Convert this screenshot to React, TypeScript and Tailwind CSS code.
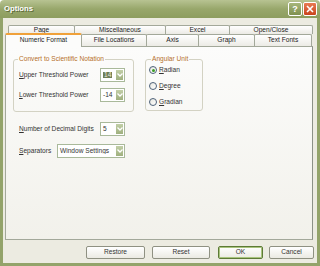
import React from "react";

const Tab = ({ label, w, selected }: { label: string; w: string; selected?: boolean }) => (
  <div
    className={`${w} flex items-center justify-center border border-b-0 border-[#a3a89a] rounded-t-[2px] -ml-px first:ml-0 text-[6.6px] leading-none text-[#222] ${
      selected
        ? "relative z-10 -mt-px h-[14px] -mb-px bg-[#fcfcfb] border-t-2 border-t-[#f0a13a] pb-[2px]"
        : "h-full bg-gradient-to-b from-white to-[#ecebe5]"
    }`}
  >
    {label}
  </div>
);

const Combo = ({ w, children }: { w: string; children: React.ReactNode }) => (
  <div className={`${w} h-[14px] flex items-center border border-[#a9b99a] bg-white`}>
    <div className="flex-1 px-[2px] text-[6.6px] leading-none text-[#333] whitespace-nowrap overflow-hidden">
      {children}
    </div>
    <div className="w-[9px] h-full flex items-center justify-center bg-gradient-to-b from-[#c2cfa8] to-[#9fb07e] border border-white rounded-[1px]">
      <svg width="6" height="4" viewBox="0 0 6 4">
        <path d="M0.5 0.5 L3 3 L5.5 0.5" stroke="white" strokeWidth="1.3" fill="none" />
      </svg>
    </div>
  </div>
);

const Radio = ({ label, checked }: { label: React.ReactNode; checked?: boolean }) => (
  <div className="flex items-center h-[8px]">
    <div className="w-[8px] h-[8px] rounded-full border border-[#4d6178] bg-gradient-to-br from-[#e6e6df] to-white flex items-center justify-center">
      {checked && <div className="w-[3px] h-[3px] rounded-full bg-[#3a9d23]" />}
    </div>
    <span className="ml-[2px] text-[6.6px] leading-none text-[#333]">{label}</span>
  </div>
);

const Button = ({ label, w, def }: { label: string; w: string; def?: boolean }) => (
  <div
    className={`${w} h-[13px] flex items-center justify-center rounded-[2px] border text-[6.6px] leading-none text-[#333] bg-gradient-to-b from-white to-[#ebeae3] ${
      def ? "border-[#5d7a36] shadow-[inset_0_0_0_1px_#a9c47e]" : "border-[#8f9182]"
    }`}
  >
    {label}
  </div>
);

const U = ({ children }: { children: React.ReactNode }) => <span className="underline">{children}</span>;

export default function App() {
  return (
    <div
      className="w-[320px] h-[266px] flex flex-col overflow-hidden"
      style={{ fontFamily: '"Liberation Sans", Arial, sans-serif' }}
    >
      {/* Title bar */}
      <div className="h-[18px] flex items-center pl-[4px] pr-[3px] bg-gradient-to-b from-[#b7c392] via-[#98a76b] to-[#8d9d5f] rounded-t-[4px]">
        <span className="text-[7.7px] font-bold text-white [text-shadow:1px_1px_0_#5d6b3a] leading-none">Options</span>
        <div className="ml-auto flex gap-px">
          <div className="w-[14px] h-[14px] rounded-[2px] border border-white bg-gradient-to-b from-[#a7b67b] to-[#7f9050] flex items-center justify-center text-white text-[9px] font-bold leading-none">
            ?
          </div>
          <div className="w-[14px] h-[14px] rounded-[2px] border border-white bg-gradient-to-b from-[#e87a52] to-[#c9431c] flex items-center justify-center">
            <svg width="8" height="8" viewBox="0 0 8 8">
              <path d="M1 1 L7 7 M7 1 L1 7" stroke="white" strokeWidth="1.6" />
            </svg>
          </div>
        </div>
      </div>

      {/* Body */}
      <div className="flex-1 flex flex-col bg-[#ecebe1] border-x-[3px] border-b-[3px] border-[#93a36a] px-[2px] pt-[7px]">
        {/* Back row of tabs */}
        <div className="flex h-[9px] pl-[3px]">
          <Tab label="Page" w="w-[67px]" />
          <Tab label="Miscellaneous" w="w-[92px]" />
          <Tab label="Excel" w="w-[65px]" />
          <Tab label="Open/Close" w="w-[84px]" />
        </div>
        {/* Front row of tabs */}
        <div className="flex h-[12px]">
          <Tab label="Numeric Format" w="w-[77px]" selected />
          <Tab label="File Locations" w="w-[66px]" />
          <Tab label="Axis" w="w-[53px]" />
          <Tab label="Graph" w="w-[57px]" />
          <Tab label="Text Fonts" w="w-[58px]" />
        </div>

        {/* Tab page */}
        <div className="w-[308px] h-[194px] border border-[#a3a89a] border-r-[#8c9187] bg-gradient-to-b from-[#fcfcfb] to-[#f2f1eb] pt-[12px] pl-[7px] flex flex-col">
          <div className="flex items-start gap-[11px]">
            {/* Scientific notation */}
            <div className="relative w-[121px] h-[53px] border border-[#d3d2c3] rounded-[3px] pt-[8px] pl-[5px]">
              <span className="absolute -top-[4px] left-[4px] px-px bg-[#fcfcfb] text-[6.6px] leading-none text-[#b5702a]">
                Convert to Scientific Notation
              </span>
              <div className="flex items-center h-[14px]">
                <span className="w-[81px] text-[6.6px] leading-none text-[#333]">
                  <U>U</U>pper Threshold Power
                </span>
                <Combo w="w-[25px]">
                  <span className="bg-[#6f7d55] text-[#e9ebdf] px-px">14</span>
                </Combo>
              </div>
              <div className="flex items-center h-[14px] mt-[6px]">
                <span className="w-[81px] text-[6.6px] leading-none text-[#333]">
                  <U>L</U>ower Threshold Power
                </span>
                <Combo w="w-[25px]">-14</Combo>
              </div>
            </div>

            {/* Angular unit */}
            <div className="relative w-[58px] h-[52px] border border-[#d3d2c3] rounded-[3px] pt-[6px] pl-[3px] flex flex-col gap-[8px]">
              <span className="absolute -top-[4px] left-[5px] px-px bg-[#fcfcfb] text-[6.6px] leading-none text-[#b5702a]">
                Angular Unit
              </span>
              <Radio label={<><U>R</U>adian</>} checked />
              <Radio label={<><U>D</U>egree</>} />
              <Radio label={<><U>G</U>radian</>} />
            </div>
          </div>

          <div className="flex items-center h-[14px] mt-[10px] pl-[6px]">
            <span className="w-[81px] text-[6.6px] leading-none text-[#333]">
              <U>N</U>umber of Decimal Digits
            </span>
            <Combo w="w-[25px]">5</Combo>
          </div>
          <div className="flex items-center h-[14px] mt-[8px] pl-[6px]">
            <span className="w-[38px] text-[6.6px] leading-none text-[#333]">
              <U>S</U>eparators
            </span>
            <Combo w="w-[68px]">Window Settings</Combo>
          </div>
        </div>

        {/* Buttons */}
        <div className="flex justify-end mt-[6px] pr-[1px]">
          <Button label="Restore" w="w-[59px]" />
          <div className="w-[7px]" />
          <Button label="Reset" w="w-[58px]" />
          <div className="w-[8px]" />
          <Button label="OK" w="w-[45px]" def />
          <div className="w-[6px]" />
          <Button label="Cancel" w="w-[45px]" />
        </div>
      </div>
    </div>
  );
}
